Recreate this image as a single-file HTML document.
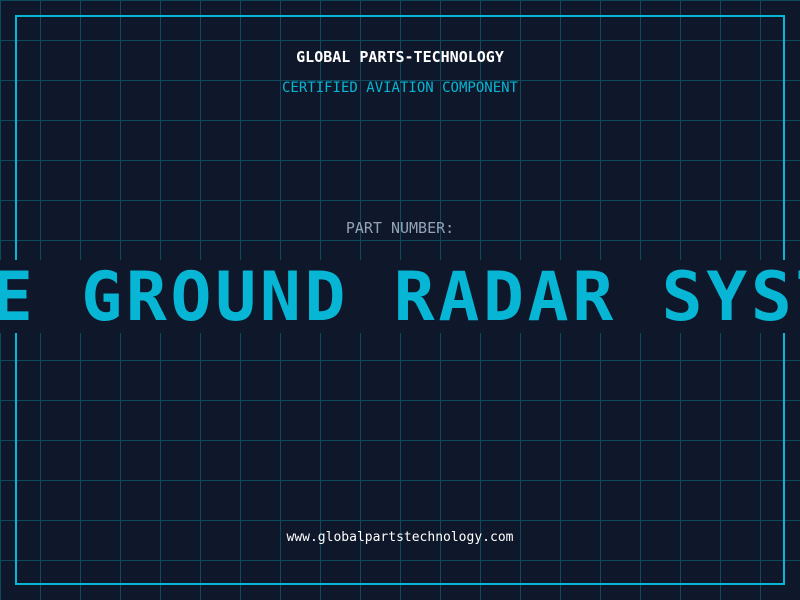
<!DOCTYPE html>
<html><head><style>
html,body{margin:0;padding:0}
body{width:800px;height:600px;overflow:hidden;position:relative;background:#0f172a;
background-image:linear-gradient(to right,#0e4a5e 1px,transparent 1px),linear-gradient(to bottom,#0e4a5e 1px,transparent 1px);
background-size:40px 40px;background-position:0 0;font-family:"DejaVu Sans Mono","Liberation Mono",monospace}
.frame{position:absolute;left:15px;top:15px;width:766px;height:566px;border:2px solid #06b6d4}
.t{position:absolute;left:0;width:800px;text-align:center;white-space:nowrap;line-height:18px}
.band{position:absolute;left:0;top:260px;width:800px;height:73px;background:#0f172a;overflow:hidden}
.big{position:absolute;left:-8px;top:4px;font-size:68px;font-weight:bold;color:#06b6d4;white-space:pre;line-height:68px;letter-spacing:3.7px}
</style></head><body>
<div class="frame"></div>
<div class="t" style="top:48px;font-size:15px;font-weight:bold;color:#fff">GLOBAL PARTS-TECHNOLOGY</div>
<div class="t" style="top:79px;font-size:14px;color:#06b6d4">CERTIFIED AVIATION COMPONENT</div>
<div class="t" style="top:219px;font-size:15px;color:#94a3b8">PART NUMBER:</div>
<div class="band"><div class="big">E GROUND RADAR SYSTEM</div></div>
<div class="t" style="top:529px;font-size:13px;color:#fff">www.globalpartstechnology.com</div>
</body></html>
